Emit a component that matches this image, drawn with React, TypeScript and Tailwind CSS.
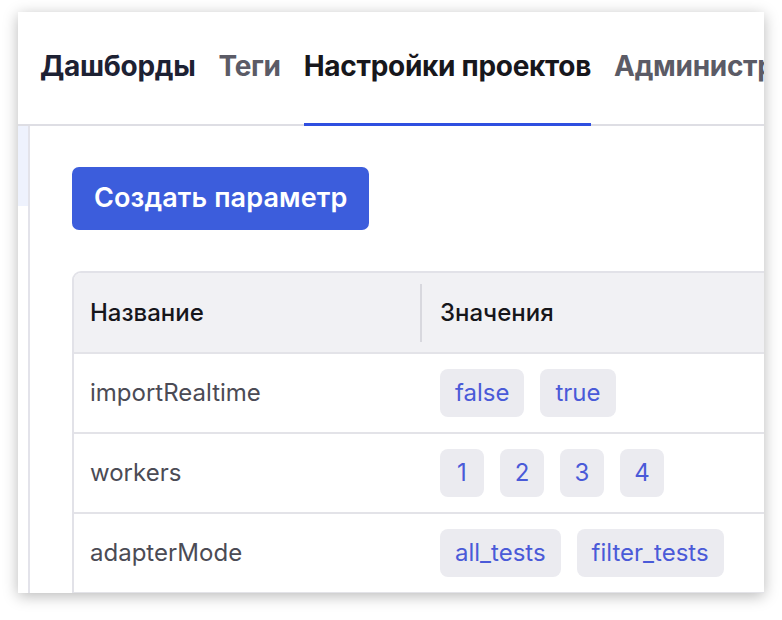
import React from 'react'

const tabs = [
  { label: 'Дашборды', tone: 'text-[#1d2133]' },
  { label: 'Теги', tone: 'text-[#5b5b66]' },
  { label: 'Настройки проектов', tone: 'text-[#17171c]', active: true },
  { label: 'Администрирование', tone: 'text-[#5b5b66]' },
]

const rows = [
  { name: 'importRealtime', values: ['false', 'true'] },
  { name: 'workers', values: ['1', '2', '3', '4'] },
  { name: 'adapterMode', values: ['all_tests', 'filter_tests'] },
]

export default function App() {
  return (
    <div className="h-[620px] w-[782px] overflow-hidden bg-white pl-[18px] pt-[12px] font-['Inter',sans-serif]">
      <div className="flex h-[581px] w-[746px] flex-col overflow-hidden bg-white shadow-[0_3px_14px_rgba(0,0,0,0.28)]">
        {/* tabs */}
        <div className="flex h-[114px] shrink-0 items-stretch gap-[23px] whitespace-nowrap border-b-2 border-[#dedee4] pl-[22px]">
          {tabs.map((t) => (
            <div key={t.label} className="relative flex items-center pb-[4px]">
              <span className={`text-[28px] font-bold tracking-[-0.3px] ${t.tone}`}>{t.label}</span>
              {t.active && (
                <div className="absolute bottom-[-2px] left-0 right-0 h-[3px] bg-[#2f4fe0]" />
              )}
            </div>
          ))}
        </div>

        <div className="flex min-h-0 flex-1">
          {/* sidebar edge */}
          <div className="w-[12px] shrink-0 border-r-2 border-[#e3e3ea]">
            <div className="h-[80px] bg-[#eef2fd]" />
          </div>

          <div className="min-w-0 flex-1 pl-[42px] pt-[41px]">
            <button className="h-[63px] rounded-[7px] bg-[#3c5ddc] px-[22px] text-[27px] font-semibold tracking-[0.1px] text-white">
              Создать параметр
            </button>

            <div className="mt-[41px] w-[760px] overflow-hidden rounded-tl-[9px] border-x-2 border-t-2 border-[#e2e2e8]">
              <div className="flex h-[79px] items-center bg-[#f1f1f4] text-[24px] font-medium text-[#16161b]">
                <div className="w-[346px] pl-[16px]">Название</div>
                <div className="h-[58px] w-[2px] bg-[#d8d8de]" />
                <div className="pl-[18px]">Значения</div>
              </div>
              {rows.map((r) => (
                <div key={r.name} className="flex h-[80px] items-center border-t-2 border-[#e3e3e8] text-[24px]">
                  <div className="w-[348px] pl-[16px] text-[#4b4b55]">{r.name}</div>
                  <div className="flex gap-[16px] pl-[18px]">
                    {r.values.map((v) => (
                      <span
                        key={v}
                        className={`flex h-[48px] items-center justify-center rounded-[8px] bg-[#ebebf0] text-[#4a5ad8] ${
                          v.length === 1 ? 'w-[44px]' : 'px-[15px]'
                        }`}
                      >
                        {v}
                      </span>
                    ))}
                  </div>
                </div>
              ))}
              <div className="h-[2px] bg-[#e3e3e8]" />
            </div>
          </div>
        </div>
      </div>
    </div>
  )
}
